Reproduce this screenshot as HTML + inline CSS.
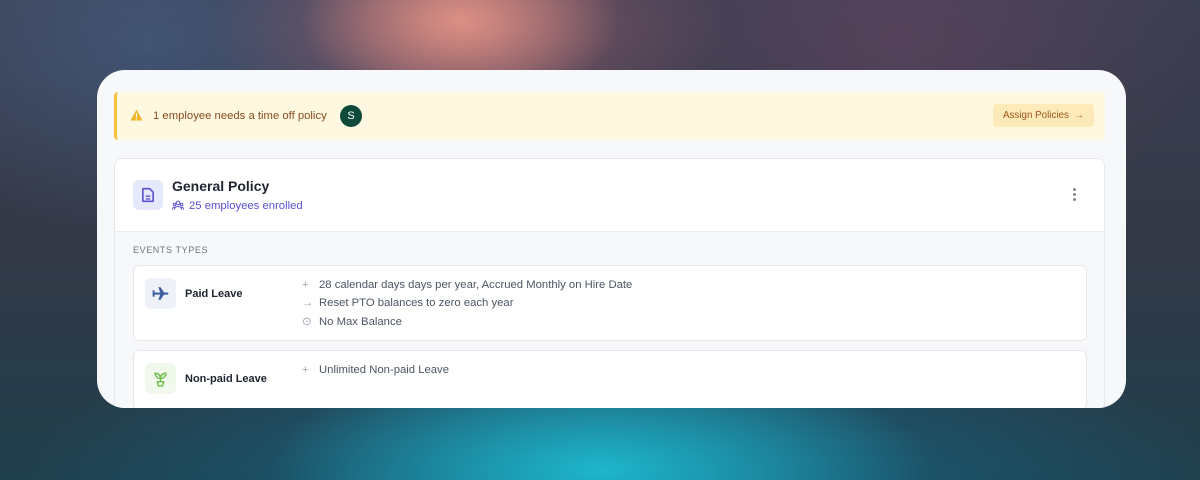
<!DOCTYPE html>
<html><head><style>
*{margin:0;padding:0;box-sizing:border-box}
body{width:1200px;height:480px;overflow:hidden;font-family:"Liberation Sans",sans-serif;position:relative;
background:
radial-gradient(ellipse 160px 90px at 460px 20px,rgba(230,150,135,.9),transparent),
radial-gradient(ellipse 260px 130px at 470px 30px,rgba(170,100,115,.7),transparent),
radial-gradient(ellipse 330px 120px at 600px 470px,rgba(30,190,210,.9),transparent),
radial-gradient(ellipse 600px 160px at 620px 480px,rgba(20,120,160,.7),transparent),
radial-gradient(ellipse 300px 200px at 150px 40px,rgba(70,100,140,.6),transparent),
radial-gradient(ellipse 300px 200px at 900px 40px,rgba(110,70,100,.5),transparent),
linear-gradient(180deg,#3d3f52 0%,#333846 50%,#1f3f4c 100%);}
.card{position:absolute;left:97px;top:70px;width:1029px;height:338px;background:#f7f8fa;border-radius:28px;overflow:hidden}
.banner{position:absolute;left:17px;top:22px;width:991px;height:48px;background:#fef8e1;border-left:3px solid #f5c13b;border-radius:4px}
.banner .t{position:absolute;left:36px;top:17px;font-size:11.3px;color:#8a4b1e}
.av{position:absolute;left:223px;top:13px;width:22px;height:22px;border-radius:50%;background:#0e4a3a;color:#fff;font-size:11px;text-align:center;line-height:22px}
.btn{position:absolute;right:11px;top:12px;width:101px;height:23px;background:#fdeab8;border-radius:4px;color:#a0561a;font-size:9.8px;line-height:23px;padding-left:10px}
.pol{position:absolute;left:17px;top:88px;width:991px;height:270px;background:#f7f8fa;border:1px solid #e5e7eb;border-radius:8px;overflow:hidden}
.hdr{height:73px;background:#fff;border-bottom:1px solid #eceef1;position:relative}
.ic{position:absolute;left:18px;top:21px;width:30px;height:30px;background:#e6e9fb;border-radius:6px}
.title{position:absolute;left:57px;top:19px;font-size:14px;font-weight:bold;color:#1f2430}
.sub{position:absolute;left:57px;top:40px;font-size:11.3px;color:#5b4fd0}
.ev{position:absolute;left:18px;top:86px;font-size:9px;color:#6b7280;letter-spacing:.6px}
.box{position:absolute;left:18px;width:954px;background:#fff;border:1px solid #e5e7eb;border-radius:6px}
.bi{position:absolute;left:11px;width:31px;height:31px;border-radius:6px}
.bl{position:absolute;left:51px;font-size:11px;font-weight:bold;color:#1f2430}
.li{position:absolute;left:168px;font-size:11.3px;color:#4b5563}
.li span{display:inline-block;width:17px;color:#9ca3af}
.dots{position:absolute;right:28px;top:29px;width:3px}
.dots i{display:block;width:3px;height:3px;border-radius:50%;background:#888;margin-bottom:2px}
</style></head><body>
<div class="card">
 <div class="banner">
  <svg style="position:absolute;left:13px;top:17px" width="13" height="12" viewBox="0 0 13 12"><path d="M6.5 0.5 L12.5 11.5 H0.5Z" fill="#f2b526"/><rect x="5.9" y="4" width="1.2" height="4" fill="#fff"/><rect x="5.9" y="9" width="1.2" height="1.2" fill="#fff"/></svg>
  <div class="t" style="top:18px">1 employee needs a time off policy</div>
  <div class="av">S</div>
  <div class="btn">Assign Policies &nbsp;→</div>
 </div>
 <div class="pol">
  <div class="hdr">
   <div class="ic"><svg style="margin:7px 8px" width="14" height="16" viewBox="0 0 12 14"><path d="M1.5 1.5h6l3 3v8h-9z" fill="none" stroke="#5b4fd0" stroke-width="1.4" stroke-linejoin="round"/><path d="M4 8h4M4 10.5h4" stroke="#5b4fd0" stroke-width="1.2"/></svg></div>
   <div class="title">General Policy</div>
   <div class="sub" style="top:41px"><svg width="12" height="10" viewBox="0 0 12 10" style="vertical-align:-1px;margin-right:5px"><circle cx="6" cy="3" r="1.8" fill="none" stroke="#5b4fd0"/><circle cx="2.5" cy="4.5" r="1.3" fill="none" stroke="#5b4fd0"/><circle cx="9.5" cy="4.5" r="1.3" fill="none" stroke="#5b4fd0"/><path d="M2.5 9.5c0-2 1.5-3 3.5-3s3.5 1 3.5 3M0.5 9.5c0-1.5.8-2.3 2-2.3M11.5 9.5c0-1.5-.8-2.3-2-2.3" fill="none" stroke="#5b4fd0"/></svg>25 employees enrolled</div>
   <div class="dots"><i></i><i></i><i></i></div>
  </div>
  <div class="ev">EVENTS TYPES</div>
  <div class="box" style="top:106px;height:76px">
   <div class="bi" style="top:12px;background:#eef1f7"><svg style="margin:7px" width="17" height="17" viewBox="0 0 16 16"><path d="M1.5 5v6" stroke="#3f5f9e" stroke-width="1.8"/><path d="M1.5 8h13" stroke="#3f5f9e" stroke-width="2" stroke-linecap="round"/><path d="M6 2h2l4 6-4 6H6l2-6z" fill="#3f5f9e"/></svg></div>
   <div class="bl" style="top:22px">Paid Leave</div>
   <div class="li" style="top:13px"><span>+</span>28 calendar days days per year, Accrued Monthly on Hire Date</div>
   <div class="li" style="top:31px"><span>→</span>Reset PTO balances to zero each year</div>
   <div class="li" style="top:49px"><span>⊙</span>No Max Balance</div>
  </div>
  <div class="box" style="top:191px;height:60px">
   <div class="bi" style="top:12px;background:#f1f8ec"><svg style="margin:7px" width="17" height="17" viewBox="0 0 16 16" fill="none" stroke="#6cc04a" stroke-width="1.3"><path d="M8 8V11M8 8C8 5 6 3 3 3C3 6 5 8 8 8ZM8 8C8 5 10 3 13 3C13 6 11 8 8 8Z"/><path d="M5 11h6l-1 4H6z"/></svg></div>
   <div class="bl" style="top:22px">Non-paid Leave</div>
   <div class="li" style="top:13px"><span>+</span>Unlimited Non-paid Leave</div>
  </div>
 </div>
</div>
</body></html>
